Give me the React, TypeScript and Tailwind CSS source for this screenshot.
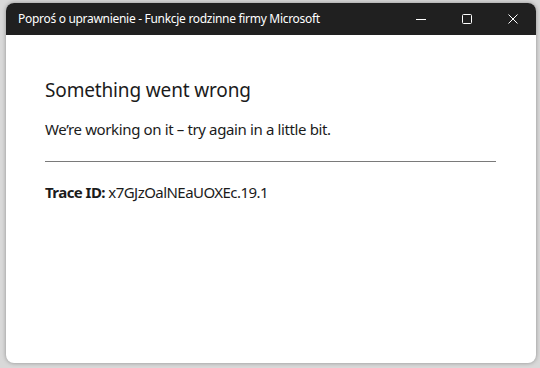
export default function App() {
  return (
    <div className="w-[540px] h-[368px] bg-[#d9d9d9] pt-[3px] pl-[6px] font-['Noto_Sans','Open_Sans',sans-serif]">
      <div className="w-[530px] h-[360px] rounded-[8px] overflow-hidden bg-white flex flex-col shadow-[0_0_4px_rgba(0,0,0,0.35)]">
        {/* Title bar */}
        <div className="h-[32px] bg-[#202020] flex items-center shrink-0">
          <span className="pl-[12px] text-[12px] tracking-[-0.3px] text-white leading-none">
            Poproś o uprawnienie - Funkcje rodzinne firmy Microsoft
          </span>
          <div className="ml-auto flex items-center h-full">
            <div className="w-[46px] h-full flex items-center justify-center">
              <svg width="10" height="10" viewBox="0 0 10 10">
                <path d="M0 5.5h10" stroke="#fff" strokeWidth="1" />
              </svg>
            </div>
            <div className="w-[46px] h-full flex items-center justify-center">
              <svg width="10" height="10" viewBox="0 0 10 10">
                <rect x="0.5" y="0.5" width="9" height="9" rx="1" fill="none" stroke="#fff" strokeWidth="1" />
              </svg>
            </div>
            <div className="w-[46px] h-full flex items-center justify-center">
              <svg width="10" height="10" viewBox="0 0 10 10">
                <path d="M0.5 0.5l9 9M9.5 0.5l-9 9" stroke="#fff" strokeWidth="1" />
              </svg>
            </div>
          </div>
        </div>

        {/* Content */}
        <div className="px-[39px] pt-[42px] text-[#1b1b1b]">
          <h1 className="text-[19px] leading-[26px] tracking-[-0.15px]">Something went wrong</h1>
          <p className="mt-[16px] text-[15px] leading-[20px] tracking-[-0.37px]">
            We’re working on it – try again in a little bit.
          </p>
          <div className="mt-[22px] w-[451px] h-px bg-[#7a7a7a]"></div>
          <p className="mt-[20px] text-[15px] leading-[20px] tracking-[-0.55px]">
            <span className="font-bold">Trace ID:</span> x7GJzOalNEaUOXEc.19.1
          </p>
        </div>
      </div>
    </div>
  );
}
